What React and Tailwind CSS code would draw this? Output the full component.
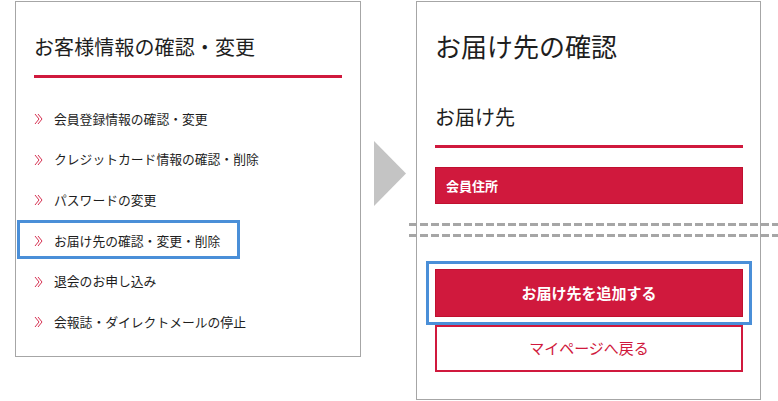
import React from "react";

const menuItems = [
  "会員登録情報の確認・変更",
  "クレジットカード情報の確認・削除",
  "パスワードの変更",
  "お届け先の確認・変更・削除",
  "退会のお申し込み",
  "会報誌・ダイレクトメールの停止",
];

function Chevron() {
  return (
    <svg width="9" height="12" viewBox="0 0 9 12" className="shrink-0">
      <polyline points="1,1 5,6 1,11" fill="none" stroke="#d0193d" strokeWidth="0.9" />
      <polyline points="4,1 8,6 4,11" fill="none" stroke="#d0193d" strokeWidth="0.9" />
    </svg>
  );
}

export default function App() {
  return (
    <div
      className="relative w-[778px] h-[401px] bg-white overflow-hidden text-[#1e1e1e]"
      style={{ fontFamily: '"Noto Sans CJK JP", "Noto Sans", sans-serif' }}
    >
      <div className="flex items-start">
        {/* Left panel */}
        <div className="ml-[15px] mt-[1px] w-[346px] h-[356px] border border-[#a6a6a6] pl-[18px] pr-[18px] pt-[31px]">
          <h2 className="text-[20px] leading-[28px] tracking-[0.1px]">お客様情報の確認・変更</h2>
          <div className="mt-[14px] h-[3px] w-[308px] bg-[#d0193d]" />
          <ul className="mt-[21px]">
            {menuItems.map((item, i) => (
              <li key={item} className="relative flex items-center h-[40.6px] gap-[11px]">
                {i === 3 && (
                  <div className="absolute left-[-17px] top-[-1px] w-[223px] h-[39px] border-[3px] border-[#4a8fd8]" />
                )}
                <Chevron />
                <span className="text-[12.8px] leading-none">{item}</span>
              </li>
            ))}
          </ul>
        </div>

        {/* Arrow */}
        <svg width="32" height="65" viewBox="0 0 32 65" className="mt-[141px] ml-[13px] shrink-0">
          <polygon points="0,0 32,32.5 0,65" fill="#c4c4c4" />
        </svg>

        {/* Right panel */}
        <div className="ml-[10px] mt-[1px] w-[345px] h-[399px] border border-[#a6a6a6] pl-[18px] pr-[18px] pt-[27px]">
          <h2 className="text-[26px] leading-[34px]">お届け先の確認</h2>
          <h3 className="mt-[40px] text-[20px] leading-[28px]">お届け先</h3>
          <div className="mt-[14px] h-[3px] w-[308px] bg-[#d0193d]" />
          <div className="mt-[19px] h-[37px] w-[308px] bg-[#d0193d] border border-[#c0102f] flex items-center pl-[10px] text-white text-[13px] font-bold">
            会員住所
          </div>

          <div className="relative mt-[65px]">
            <div className="absolute left-[-9px] top-[-8px] w-[326px] h-[64px] border-[3px] border-[#4a8fd8]" />
            <button className="relative w-[308px] h-[48px] bg-[#d0193d] border border-[#c0102f] text-white text-[15px] font-bold">
              お届け先を追加する
            </button>
          </div>
          <button className="mt-[8px] w-[308px] h-[47px] border-2 border-[#d0193d] bg-white text-[#d0193d] text-[15px]">
            マイページへ戻る
          </button>
        </div>
      </div>

      {/* Cut lines */}
      <div className="absolute left-[409px] right-0 top-[223px] h-[3px] bg-[repeating-linear-gradient(90deg,#a6a6a6_0_8px,transparent_8px_11px)]" />
      <div className="absolute left-[409px] right-0 top-[234px] h-[3px] bg-[repeating-linear-gradient(90deg,#a6a6a6_0_8px,transparent_8px_11px)]" />
    </div>
  );
}
